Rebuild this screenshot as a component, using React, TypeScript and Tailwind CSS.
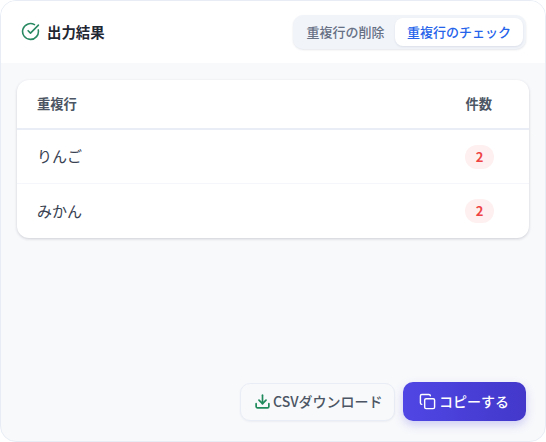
import { CircleCheckBig, Copy, Download } from "lucide-react";

const rows = [
  { name: "りんご", count: 2 },
  { name: "みかん", count: 2 },
];

export default function App() {
  return (
    <div className="w-[546px] h-[442px] flex flex-col overflow-hidden rounded-2xl border border-[#e8edf5] bg-[#f8f9fb] font-['Noto_Sans_CJK_JP',sans-serif]">
      {/* header */}
      <div className="h-[62px] shrink-0 flex items-center justify-between bg-white pl-5 pr-[19px]">
        <div className="flex items-center gap-[7px]">
          <CircleCheckBig className="w-[19px] h-[19px] text-[#2a8a63]" strokeWidth={2} />
          <span className="text-[14.4px] font-semibold text-[#1f2733]">出力結果</span>
        </div>
        <div className="flex items-center rounded-[10px] bg-[#f1f4f9] p-[3px] shadow-[0_1px_2px_rgba(30,50,90,0.12)]">
          <button className="h-[28px] px-[10.5px] text-[13px] font-medium text-[#667085] rounded-lg">重複行の削除</button>
          <button className="h-[28px] px-3 text-[13px] font-medium text-[#2563eb] bg-white rounded-lg shadow-[0_1px_2px_rgba(30,50,90,0.1)]">重複行のチェック</button>
        </div>
      </div>

      {/* table */}
      <div className="mx-4 mt-[17px] rounded-xl bg-white shadow-[0_1px_3px_rgba(30,40,70,0.2)] overflow-hidden">
        <div className="h-[50px] flex items-center justify-between pl-5 pr-[37px] border-b-2 border-[#e9edf5]">
          <span className="text-[13.3px] font-semibold text-[#4b5563]">重複行</span>
          <span className="text-[13.3px] font-semibold text-[#4b5563]">件数</span>
        </div>
        {rows.map((row, i) => (
          <div
            key={row.name}
            className={`h-[54px] flex items-center justify-between pl-5 pr-[35px] ${i === 0 ? "border-b border-[#f5f6fb]" : ""}`}
          >
            <span className="text-[15px] text-[#374151]">{row.name}</span>
            <span className="w-[29px] h-[24px] flex items-center justify-center rounded-full bg-[#fef0f0] text-[13px] font-semibold text-[#ef4444]">
              {row.count}
            </span>
          </div>
        ))}
      </div>

      {/* actions */}
      <div className="mt-auto mb-[20px] mr-[19px] flex justify-end items-center gap-2">
        <button className="h-[38px] w-[155px] pl-[13px] flex items-center gap-[2px] rounded-[10px] border border-[#e9edf5] bg-[#f8f9fb] text-[14px] font-medium text-[#4b5563] shadow-[0_1px_2px_rgba(30,50,90,0.06)]">
          <Download className="w-[17px] h-[17px] text-[#1f8a5c]" strokeWidth={2.4} />
          CSVダウンロード
        </button>
        <button className="h-[39px] w-[123px] pl-4 flex items-center gap-[3px] rounded-[10px] bg-gradient-to-r from-[#4f46e5] to-[#4338ca] text-[14px] font-medium text-white shadow-[0_4px_10px_rgba(79,70,229,0.25)]">
          <Copy className="w-[17px] h-[17px]" strokeWidth={2} />
          コピーする
        </button>
      </div>
    </div>
  );
}
